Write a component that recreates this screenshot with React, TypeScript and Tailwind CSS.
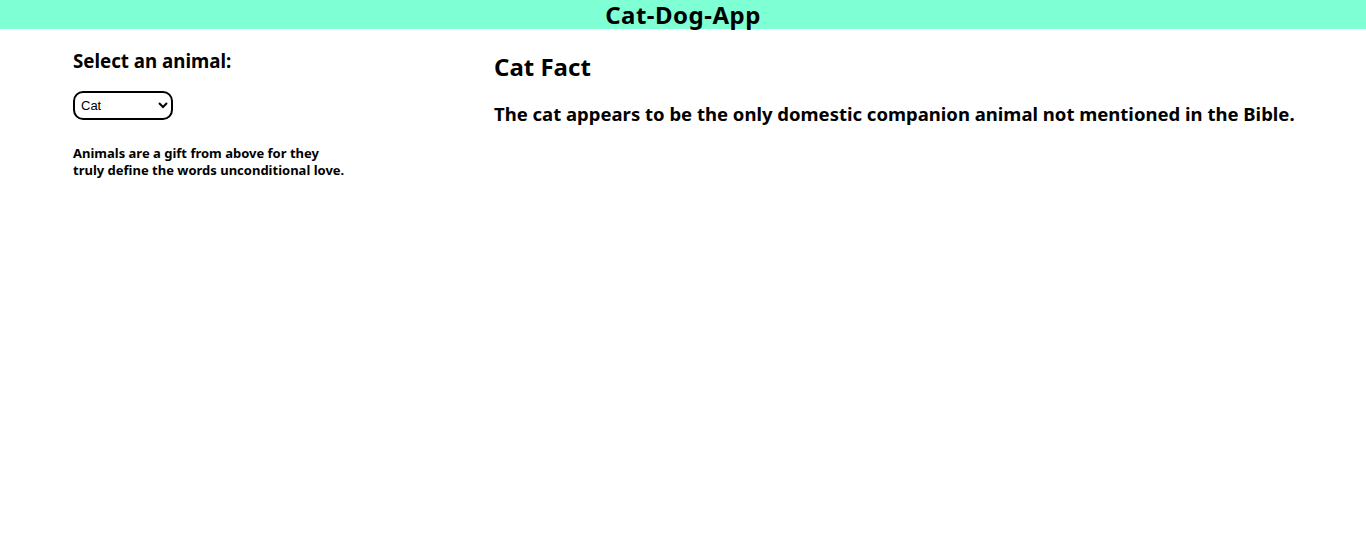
export default function App() {
  return (
    <div className="min-h-screen bg-white text-black [font-family:'Noto_Sans',sans-serif]">
      <header className="flex h-[29px] items-center justify-center bg-[#7fffd4]">
        <h1 className="text-[24px] font-bold leading-none tracking-[0.5px]">Cat-Dog-App</h1>
      </header>

      <main className="grid grid-cols-[421px_1fr] pl-[73px] pt-[23px]">
        <section>
          <h3 className="-mt-[2px] text-[18.72px] font-bold leading-[22px]">Select an animal:</h3>
          <select
            defaultValue="cat"
            className="mt-[19px] h-[29px] w-[100px] rounded-[10px] border-2 border-black bg-white px-[2px] text-[13px] [font-family:'Liberation_Sans',sans-serif]"
          >
            <option value="cat">Cat</option>
            <option value="dog">Dog</option>
          </select>
          <p className="mt-[25px] w-[275px] text-[13px] font-bold leading-[17px]">
            Animals are a gift from above for they truly define the words unconditional love.
          </p>
        </section>

        <section>
          <h2 className="mt-[1px] text-[24px] font-bold leading-[28px]">Cat Fact</h2>
          <p className="mt-[21px] text-[18.5px] font-bold leading-[24px]">
            The cat appears to be the only domestic companion animal not mentioned in the Bible.
          </p>
        </section>
      </main>
    </div>
  )
}
